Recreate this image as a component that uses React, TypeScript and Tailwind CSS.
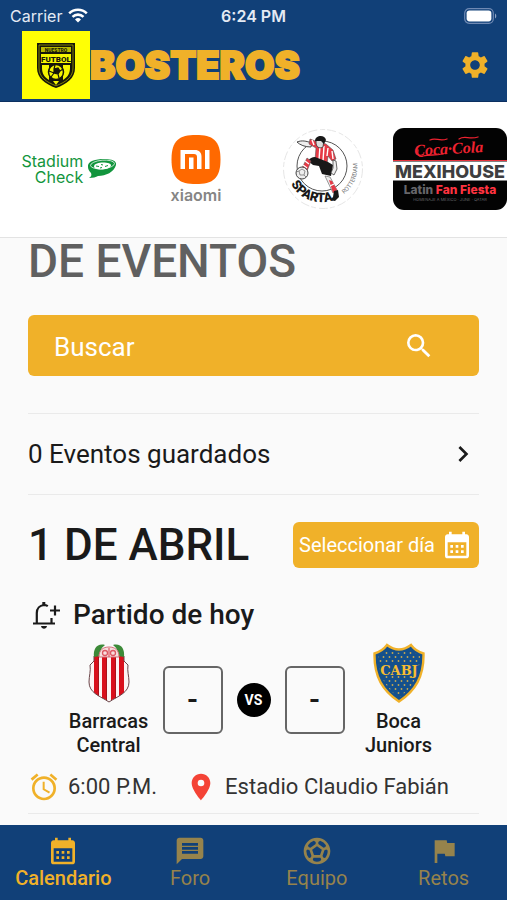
import { useState } from "react";
import {
  MdAlarm,
  MdCalendarMonth,
  MdChevronRight,
  MdFlag,
  MdLocationOn,
  MdMessage,
  MdSearch,
  MdSettings,
  MdSportsSoccer,
} from "react-icons/md";

const tabs = [
  { id: "calendario", label: "Calendario", Icon: MdCalendarMonth },
  { id: "foro", label: "Foro", Icon: MdMessage },
  { id: "equipo", label: "Equipo", Icon: MdSportsSoccer },
  { id: "retos", label: "Retos", Icon: MdFlag },
];

function WifiIcon() {
  return (
    <svg width="20" height="15" viewBox="0 0 20 15" fill="none" stroke="white" strokeWidth="2.6">
      <path d="M1.2 5.4a12.6 12.6 0 0 1 17.6 0" />
      <path d="M4.5 8.9a7.8 7.8 0 0 1 11 0" />
      <path d="M10 14.6 7 11.5a4.3 4.3 0 0 1 6 0z" fill="white" stroke="none" />
    </svg>
  );
}

function BatteryIcon() {
  return (
    <svg width="33" height="16" viewBox="0 0 33 16" fill="none">
      <rect x="0.7" y="0.7" width="28.6" height="14.6" rx="4.5" stroke="#6f89b3" strokeWidth="1.2" />
      <rect x="2.6" y="2.6" width="24.8" height="10.8" rx="2.8" fill="white" />
      <path d="M31 5.5c1.7.8 1.7 4.2 0 5z" fill="#8fa3c4" />
    </svg>
  );
}

function FutbolBadge() {
  return (
    <svg width="38" height="46" viewBox="0 0 38 46">
      <path d="M0 1h38v25c0 10-8 16-19 20C8 42 0 36 0 26z" fill="#16160a" />
      <path d="M2 3h34v23c0 9-7 14-17 17.8C9 40 2 35 2 26z" fill="none" stroke="#9c9c00" strokeWidth="0.8" />
      <rect x="4" y="5" width="30" height="5" fill="#b9b900" />
      <text x="19" y="9.5" textAnchor="middle" fontSize="5" fontWeight="800" fontFamily="Roboto, sans-serif" fill="#16160a">
        NUESTRO
      </text>
      <rect x="4" y="12" width="30" height="9" fill="#f4f400" />
      <text x="19" y="19.5" textAnchor="middle" fontSize="8" fontWeight="900" fontFamily="Roboto, sans-serif" fill="#16160a">
        FUTBOL
      </text>
      <path d="M5 23h7v15c-5-3-7-7-7-12zM33 23h-7v15c5-3 7-7 7-12z" fill="#f4f400" />
      <circle cx="19" cy="30" r="7.5" fill="#f4f400" stroke="#16160a" strokeWidth="1.5" />
      <path
        d="m17 27 4-1 2 3-2 3-4-1zM12 29l5 2M18 23l-1 4M23 29l3-2M21 32l1 4M14 35l3-4"
        fill="#16160a"
        stroke="#16160a"
        strokeWidth="1.2"
      />
      <path d="M16 39h6l-3 4z" fill="#f4f400" />
    </svg>
  );
}

function StadiumCheckLogo() {
  return (
    <div className="flex items-center gap-1 text-[#12953d]">
      <div className="flex flex-col items-end font-['Inter',sans-serif] text-base leading-4">
        <span>Stadium</span>
        <span>Check</span>
      </div>
      <svg width="30" height="20" viewBox="0 0 30 20">
        <path d="M1 8C0 2 9 0 17 0c8 0 13 2 12 6-2 7-10 11-18 11-2 1-5 2-9 2 2-1 3-3 2-5-2-2-3-4-3-6z" fill="#12953d" />
        <ellipse cx="15.5" cy="5.5" rx="12" ry="4.3" transform="rotate(-5 15.5 5.5)" fill="none" stroke="white" strokeWidth="0.7" />
        <path d="M7 7.5c0-3 5-4 9-4 5 0 8 1 8 3-1 3-6 4-10 4S7 9.5 7 7.5z" fill="white" />
        <path d="m9 7 3 .5M14 5.5l2 .5M18 7.5l3-1M13 9l2-.5" stroke="#12953d" strokeWidth="1" />
      </svg>
    </div>
  );
}

function XiaomiLogo() {
  return (
    <svg width="58" height="72" viewBox="0 -2 58 72">
      <path d="M29 0c16.500 0 24.500 5 24.500 24.500S45.500 49 29 49 4.500 44 4.500 24.500 12.500 0 29 0z" fill="#ff6900" />
      <path
        d="M13.500 15H28c4 0 6.500 2.500 6.500 6.500V34H30V22c0-2-1-3-3-3h-9v15h-4.500zM22 22.500h4.500V34H22zM38 15h4.500v19H38z"
        fill="white"
      />
      <text x="29" y="66" textAnchor="middle" fontFamily="Inter, sans-serif" fontSize="16" fontWeight="600" fill="#858585">
        xiaomi
      </text>
    </svg>
  );
}

function SpartaLogo() {
  return (
    <svg width="82" height="82" viewBox="0 0 82 82" fill="none">
      <defs>
        <path id="sparta-arc" d="M9 56a35 35 0 0 0 49 13" />
        <path id="rotterdam-arc" d="M62 66a33 33 0 0 0 13-31" />
      </defs>
      <circle cx="41" cy="41" r="39.5" stroke="#e6e6e6" strokeWidth="1" strokeDasharray="9 3 5 2" />
      <circle cx="40" cy="38" r="25" stroke="#555" strokeWidth="1" />
      <path d="M15 14c5-2 9-1 15 1l-1 4c-6 0-11-2-14-5z" fill="#eee" stroke="#333" strokeWidth="0.9" />
      <path d="m28 11 8 3 8 2 7 6 3 9-4 2-4-5-1 8-12-4 1-12-7-4z" fill="#e63a46" stroke="#555" strokeWidth="0.6" />
      <path d="m38 18-1 14M42 18l-1 15M46 20l-1 8M50 23l1 8M30 12l2 5" stroke="white" strokeWidth="1.4" />
      <path d="M34 14c0-4 6-5 8-3l-1 8c-4 2-7 0-7-5z" fill="#ddd" stroke="#333" strokeWidth="0.8" />
      <path d="M33 13c0-6 10-7 11-1l-2 4-3-3z" fill="#181818" />
      <path d="m33 29 13 5 5 3-2 11-9-2-3-8-6-1-5-4c2-3 4-4 7-4z" fill="#181818" />
      <path d="m25 30 4 3-4 10-5-3z" fill="#e63a46" stroke="#555" strokeWidth="0.6" />
      <path d="m23 33 4 3M21 37l4 3" stroke="white" strokeWidth="1.3" />
      <path d="m51 32 3 1 1 8-3 6-3-2 2-5z" fill="#eee" stroke="#444" strokeWidth="0.8" />
      <path d="m43 48 5 1 7 13-4 3z" fill="#eee" stroke="#555" strokeWidth="0.6" />
      <path d="m47 52 3 1 5 9-4 3z" fill="#e63a46" />
      <path d="m48 58 4-2" stroke="white" strokeWidth="1.3" />
      <path d="m52 63 4-1 1 7-4 4-5-1 3-3z" fill="#181818" />
      <circle cx="20" cy="45" r="6" fill="#eee" stroke="#444" strokeWidth="1" />
      <path d="m17 43 3-2 3 2-1 4h-4zM17 43l-3 1M22 47l2 2" stroke="#777" strokeWidth="0.8" />
      <text fontFamily="Roboto, sans-serif" fontSize="13" fontWeight="900" fill="#181818">
        <textPath href="#sparta-arc">SPARTA</textPath>
      </text>
      <text fontFamily="Roboto, sans-serif" fontSize="6" fill="#777">
        <textPath href="#rotterdam-arc">ROTTERDAM</textPath>
      </text>
    </svg>
  );
}

function MexihouseLogo() {
  return (
    <svg width="114" height="82" viewBox="0 0 114 82">
      <rect width="114" height="82" rx="11" fill="#030303" />
      <path d="M0 33.5h114v19H0z" fill="white" />
      <path d="M0 32.5h114" stroke="#e8323c" strokeWidth="1" />
      <text
        x="56"
        y="26"
        textAnchor="middle"
        fontFamily="'Liberation Serif', serif"
        fontSize="16"
        fontWeight="700"
        fontStyle="italic"
        transform="rotate(-3 56 26)"
        fill="#ee2230"
      >
        Coca·Cola
      </text>
      <path
        d="M25 22c-1 5 1 7 5 6 7-2 12 0 19-2M37 12c6-3 9 2 17-1M66 11c6-4 10 1 19-2"
        fill="none"
        stroke="#ee2230"
        strokeWidth="1.3"
        strokeLinecap="round"
      />
      <text x="57" y="49.5" textAnchor="middle" fontFamily="Inter, sans-serif" fontSize="18" fontWeight="800" fill="#3e3e40">
        MEXIHOUSE
      </text>
      <text x="57" y="66" textAnchor="middle" fontFamily="Inter, sans-serif" fontSize="12" fontWeight="800" fill="#ff3340">
        <tspan fill="#66666a">Latin</tspan> Fan Fiesta
      </text>
      <text x="57" y="73" textAnchor="middle" fontFamily="Inter, sans-serif" fontSize="4" fill="#66666a">
        HOMENAJE A MÉXICO · JUNE · QATAR
      </text>
    </svg>
  );
}

function BellPlusIcon() {
  return (
    <svg width="29" height="28" viewBox="0 0 29 28" fill="none" stroke="#1a1a1a" strokeWidth="2.2">
      <path d="M1 22.5h22M4.8 22V12c0-4.5 3-7.5 7-8 1.5 0 3 .5 4 1.2M19.5 17v5.5" />
      <path d="M18 9.5h10M23 4.5v10" />
      <path d="M11.8 4V1" strokeWidth="3" />
      <path d="M9 25h6c-.5 3.5-5.5 3.5-6 0z" fill="#1a1a1a" stroke="none" />
    </svg>
  );
}

function BarracasCrest() {
  return (
    <svg width="42" height="60" viewBox="0 0 42 60">
      <defs>
        <clipPath id="barracas-body">
          <path d="M6 13h30l.5 5 3.5 4c-2 6 1 11 1 17 0 11-11 14-20 20C12 53 1 50 1 39c0-6 3-11 1-17l3.5-4z" />
        </clipPath>
      </defs>
      <g clipPath="url(#barracas-body)">
        <path d="M0 12h42v48H0z" fill="#fdf3f3" />
        <path d="M6 12h5v48H6zM14 12h5v48h-5zM23 12h5v48h-5zM31 12h5v48h-5z" fill="#d9101c" />
        <path d="M10 12h1v48h-1zM18 12h1v48h-1zM27 12h1v48h-1z" fill="#a8121a" />
      </g>
      <path d="M6 13v5l-4 4c1 6-1 11-1 17 0 11 11 14 20 20 9-6 20-9 20-20 0-6-2-11-1-17l-4-4v-5" fill="none" stroke="#6b4549" strokeWidth="1" />
      <path d="M17 2C9 0 5 6 6 14l6-1c0-5 1-8 5-11zM25 2c8-2 12 4 11 12l-6-1c0-5-1-8-5-11z" fill="#3c8a38" />
      <path d="M11 14c0-7 4-10 10-10s10 3 10 10z" fill="#f7dede" stroke="#d5717a" strokeWidth="1" />
      <circle cx="17" cy="10" r="2.5" fill="none" stroke="#dd5964" strokeWidth="1.3" />
      <circle cx="25" cy="10" r="2.5" fill="none" stroke="#dd5964" strokeWidth="1.3" />
      <path d="M21 5v9" stroke="#dd5964" strokeWidth="1.2" />
    </svg>
  );
}

function BocaCrest() {
  return (
    <svg width="52" height="60" viewBox="0 0 52 60">
      <defs>
        <pattern id="boca-stars" width="6" height="8" patternUnits="userSpaceOnUse">
          <circle cx="1.5" cy="2" r="0.9" fill="#c7a84e" />
          <circle cx="4.5" cy="6" r="0.9" fill="#c7a84e" />
        </pattern>
      </defs>
      <path
        d="M1.5 10.5C7 9 11 6 14 2c8 6 16 6 24 0 3 4 7 7 12.5 8.5C51 34 42 48 26 58.5 10 48 1 34 1.5 10.5z"
        fill="#14508c"
        stroke="#f0b129"
        strokeWidth="2.4"
      />
      <path d="M5 13c4-2 7-4 9-7 8 5 16 5 24 0 2 3 5 5 9 7-.5 19-7 31-21 42C12 44 5.5 32 5 13z" fill="url(#boca-stars)" />
      <path d="M7 20h38v13H7z" fill="#14508c" />
      <text x="26" y="32" textAnchor="middle" fontFamily="'DejaVu Serif', serif" fontSize="13" fontWeight="700" fill="#f7bd31">
        CABJ
      </text>
    </svg>
  );
}

function Team({ name, children }: { name: string; children: React.ReactNode }) {
  return (
    <div className="flex w-[108px] flex-col items-center gap-1.5">
      {children}
      <span className="w-24 text-center text-xl leading-6 font-medium">{name}</span>
    </div>
  );
}

function Score() {
  return (
    <div className="flex h-[68px] w-[60px] items-center justify-center rounded-md border-2 border-[#666] text-3xl font-semibold">
      -
    </div>
  );
}

export default function App() {
  const [active, setActive] = useState("calendario");
  const [query, setQuery] = useState("");

  return (
    <div className="flex min-h-screen flex-col bg-[#fafafa] font-['Roboto',sans-serif] text-[#1a1a1a]">
      <header className="border-b border-[#0b2f60] bg-[#114078]">
        <div className="grid h-[31px] grid-cols-3 items-center px-2.5 font-['Inter',sans-serif] text-base text-[#e4eaf4]">
          <span className="flex items-center gap-1.5">
            Carrier
            <WifiIcon />
          </span>
          <span className="text-center font-semibold">6:24 PM</span>
          <span className="justify-self-end">
            <BatteryIcon />
          </span>
        </div>
        <div className="flex items-center pr-4 pb-0.5 pl-[22px]">
          <div className="flex size-[68px] items-center justify-center bg-[#ffff05]">
            <FutbolBadge />
          </div>
          <span className="font-['Inter',sans-serif] text-[38px] leading-10 font-black text-[#f0b129] [-webkit-text-stroke:2px_#f0b129]">
            BOSTEROS
          </span>
          <button type="button" aria-label="Ajustes" className="ml-auto text-[#f0b129]">
            <MdSettings size={32} />
          </button>
        </div>
      </header>

      <section aria-label="Patrocinadores" className="overflow-hidden border-b border-[#e3e3e3] bg-white">
        <div className="-mr-1.5 ml-1.5 flex h-[135px] items-center pb-0.5">
          <div className="flex w-1/4 shrink-0 justify-center">
            <StadiumCheckLogo />
          </div>
          <div className="flex w-1/4 shrink-0 justify-center">
            <XiaomiLogo />
          </div>
          <div className="flex w-1/4 shrink-0 justify-center">
            <SpartaLogo />
          </div>
          <div className="flex w-1/4 shrink-0 justify-center">
            <MexihouseLogo />
          </div>
        </div>
      </section>

      <main className="flex-1 px-7">
        <h1 className="text-[46px] leading-[46px] font-medium text-[#606060]">DE EVENTOS</h1>

        <form
          className="mt-[31px] flex h-[61px] items-center rounded-md bg-[#f0b129] pr-11 pl-[26px] text-white"
          onSubmit={(e) => e.preventDefault()}
        >
          <input
            type="text"
            aria-label="Buscar"
            placeholder="Buscar"
            value={query}
            onChange={(e) => setQuery(e.target.value)}
            className="min-w-0 flex-1 bg-transparent pt-1 text-[26px] outline-none placeholder:text-white"
          />
          <button type="submit" aria-label="Buscar eventos">
            <MdSearch size={32} />
          </button>
        </form>

        <button type="button" className="mt-[37px] flex h-[82px] w-full items-center justify-between border-y border-[#eaeaea] text-[26px]">
          0 Eventos guardados
          <MdChevronRight size={32} />
        </button>

        <div className="mt-[27px] flex items-center justify-between">
          <h2 className="text-[44px] leading-[46px] font-medium">1 DE ABRIL</h2>
          <button type="button" className="flex h-[46px] items-center gap-1.5 rounded-md bg-[#f0b129] px-1.5 text-xl text-white">
            Seleccionar día
            <MdCalendarMonth size={32} />
          </button>
        </div>

        <div className="mt-[31px] flex items-center gap-3 pl-1">
          <BellPlusIcon />
          <h3 className="text-[28px] leading-8 font-medium">Partido de hoy</h3>
        </div>

        <div className="mt-3 flex items-center justify-center">
          <Team name="Barracas Central">
            <BarracasCrest />
          </Team>
          <Score />
          <span className="mx-3.5 flex size-[34px] items-center justify-center rounded-full bg-black text-sm font-bold text-white">VS</span>
          <Score />
          <Team name="Boca Juniors">
            <BocaCrest />
          </Team>
        </div>

        <div className="mt-3.5 flex items-center border-b border-[#eaeaea] pb-2.5 text-[22px] leading-8 text-[#333]">
          <MdAlarm size={32} className="text-[#f0b129]" />
          <span className="ml-2">6:00 P.M.</span>
          <MdLocationOn size={32} className="ml-7 text-[#f44336]" />
          <span className="ml-2">Estadio Claudio Fabián</span>
        </div>
      </main>

      <nav className="sticky bottom-0 grid h-[75px] grid-cols-4 bg-[#114078]">
        {tabs.map(({ id, label, Icon }) => (
          <button
            key={id}
            type="button"
            onClick={() => setActive(id)}
            className={`flex flex-col items-center pt-2.5 text-xl leading-[22px] ${
              active === id ? "font-medium text-[#f0b129]" : "text-[#96834c]"
            }`}
          >
            <Icon size={32} />
            {label}
          </button>
        ))}
      </nav>
    </div>
  );
}
